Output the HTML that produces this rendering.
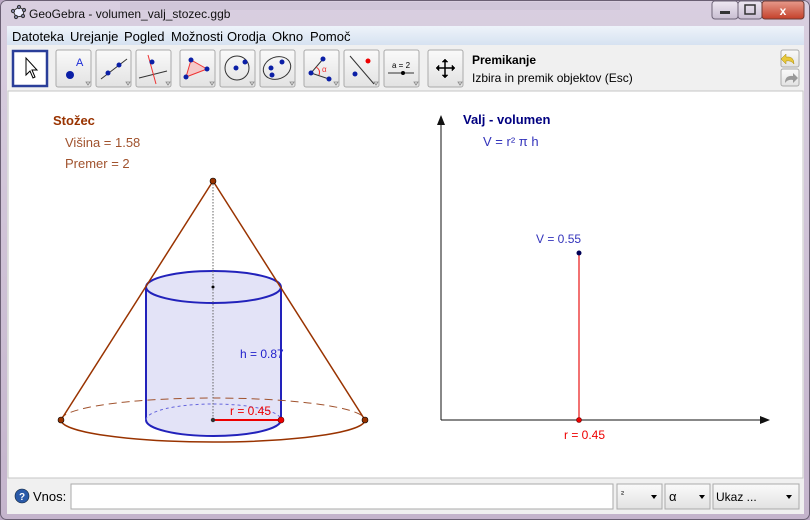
<!DOCTYPE html>
<html><head><meta charset="utf-8"><style>
html,body{margin:0;padding:0;width:810px;height:520px;overflow:hidden;background:#b9a6c2;}
svg{display:block;font-family:"Liberation Sans",sans-serif;}
</style></head><body>
<svg width="810" height="520" viewBox="0 0 810 520" xmlns="http://www.w3.org/2000/svg">
<defs>
<linearGradient id="tb" x1="0" y1="0" x2="0" y2="1"><stop offset="0" stop-color="#d9cfe0"/><stop offset="1" stop-color="#c4b4cc"/></linearGradient>
<linearGradient id="mb" x1="0" y1="0" x2="0" y2="1"><stop offset="0" stop-color="#eef3fa"/><stop offset="1" stop-color="#d6e2f1"/></linearGradient>
<linearGradient id="btn" x1="0" y1="0" x2="0" y2="1"><stop offset="0" stop-color="#fafafa"/><stop offset="1" stop-color="#e2e2e2"/></linearGradient>
<linearGradient id="cl" x1="0" y1="0" x2="0" y2="1"><stop offset="0" stop-color="#e79b8c"/><stop offset="1" stop-color="#c4402a"/></linearGradient>
<linearGradient id="wb" x1="0" y1="0" x2="0" y2="1"><stop offset="0" stop-color="#eee8f2"/><stop offset="1" stop-color="#c9bed2"/></linearGradient>
<marker id="ar" markerWidth="10" markerHeight="8" refX="9" refY="4" orient="auto" markerUnits="userSpaceOnUse"><path d="M0,0 L10,4 L0,8 Z" fill="#111"/></marker>
</defs>
<!-- window frame -->
<rect x="0" y="0" width="810" height="520" rx="6" fill="url(#tb)"/>
<rect x="120" y="2" width="500" height="8" fill="#c9bfd3" opacity=".6"/>
<rect x="0.5" y="0.5" width="809" height="519" rx="6" fill="none" stroke="#6a5f73"/>
<!-- title -->
<g transform="translate(13,7)" fill="none" stroke="#333" stroke-width="1">
<polygon points="6,0 11,3 10,9 3,10 0,4" fill="#eef"/>
<circle cx="6" cy="0" r="1.6" fill="#88a"/><circle cx="11" cy="3" r="1.6" fill="#88a"/><circle cx="10" cy="9" r="1.6" fill="#88a"/><circle cx="3" cy="10" r="1.6" fill="#88a"/><circle cx="0" cy="4" r="1.6" fill="#88a"/>
</g>
<text x="29" y="18" font-size="12" fill="#111">GeoGebra - volumen_valj_stozec.ggb</text>
<!-- window buttons -->
<rect x="712" y="1" width="26" height="18" rx="3" fill="url(#wb)" stroke="#6d6477"/>
<rect x="720" y="11" width="10" height="3" fill="#333"/>
<rect x="738" y="1" width="24" height="18" rx="3" fill="url(#wb)" stroke="#6d6477"/>
<rect x="745" y="5" width="10" height="9" fill="none" stroke="#333" stroke-width="1.5"/>
<rect x="762" y="1" width="42" height="18" rx="3" fill="url(#cl)" stroke="#6d3a33"/>
<text x="783" y="15" font-size="12" font-weight="bold" fill="#fff" text-anchor="middle">x</text>
<!-- inner client -->
<rect x="7" y="26" width="797" height="488" fill="#f0f0f0"/>
<rect x="7" y="26" width="797" height="19" fill="url(#mb)"/>
<g font-size="13" fill="#000">
<text x="12" y="41">Datoteka</text><text x="70" y="41">Urejanje</text><text x="124" y="41">Pogled</text><text x="171" y="41">Možnosti</text><text x="227" y="41">Orodja</text><text x="272" y="41">Okno</text><text x="310" y="41">Pomoč</text>
</g>
<!-- toolbar -->
<rect x="7" y="45" width="797" height="46" fill="#f0f0f0"/>
<g id="btns" stroke="#aaa" fill="url(#btn)">
<rect x="56" y="50" width="35" height="37" rx="2"/><rect x="96" y="50" width="35" height="37" rx="2"/><rect x="136" y="50" width="35" height="37" rx="2"/>
<rect x="180" y="50" width="35" height="37" rx="2"/><rect x="220" y="50" width="35" height="37" rx="2"/><rect x="260" y="50" width="35" height="37" rx="2"/>
<rect x="304" y="50" width="35" height="37" rx="2"/><rect x="344" y="50" width="35" height="37" rx="2"/><rect x="384" y="50" width="35" height="37" rx="2"/>
<rect x="428" y="50" width="35" height="37" rx="2"/>
</g>
<rect x="13" y="51" width="34" height="35" fill="#fff" stroke="#2a3e99" stroke-width="2.5"/>
<path d="M26,58 L26,75 L30,71 L33,78 L35,77 L32,70 L37,70 Z" fill="#fff" stroke="#000"/>
<g fill="none" stroke="#888" stroke-width=".8">
<path d="M86,82 l4,0 l-2,3z M126,82 l4,0 l-2,3z M166,82 l4,0 l-2,3z M210,82 l4,0 l-2,3z M250,82 l4,0 l-2,3z M290,82 l4,0 l-2,3z M334,82 l4,0 l-2,3z M374,82 l4,0 l-2,3z M414,82 l4,0 l-2,3z M458,82 l4,0 l-2,3z"/>
</g>
<!-- icons -->
<circle cx="70" cy="75" r="4" fill="#0b1fa6"/><text x="76" y="66" font-size="11" fill="#1a2ad6">A</text>
<line x1="101" y1="79" x2="127" y2="59" stroke="#333"/><circle cx="108" cy="73" r="2.5" fill="#0b1fa6"/><circle cx="119" cy="65" r="2.5" fill="#0b1fa6"/>
<line x1="139" y1="78" x2="167" y2="71" stroke="#333"/><line x1="148" y1="55" x2="156" y2="84" stroke="#e33"/><circle cx="152" cy="62" r="2.5" fill="#0b1fa6"/>
<polygon points="191,60 186,77 207,69" fill="#f5c8c8" stroke="#e33"/><circle cx="191" cy="60" r="2.5" fill="#0b1fa6"/><circle cx="186" cy="77" r="2.5" fill="#0b1fa6"/><circle cx="207" cy="69" r="2.5" fill="#0b1fa6"/>
<circle cx="237" cy="68" r="12" fill="none" stroke="#333"/><circle cx="236" cy="68" r="2.5" fill="#0b1fa6"/><circle cx="245" cy="62" r="2.5" fill="#0b1fa6"/>
<ellipse cx="277" cy="68" rx="14" ry="11" fill="none" stroke="#333" transform="rotate(-20 277 68)"/><circle cx="282" cy="62" r="2.5" fill="#0b1fa6"/><circle cx="271" cy="68" r="2.5" fill="#0b1fa6"/><circle cx="272" cy="75" r="2.5" fill="#0b1fa6"/>
<path d="M323,59 L311,73 L329,79" fill="none" stroke="#333"/><path d="M316,67 Q321,70 319,75" fill="none" stroke="#e33"/><text x="322" y="72" font-size="8" fill="#e33">α</text><circle cx="323" cy="59" r="2.5" fill="#0b1fa6"/><circle cx="311" cy="73" r="2.5" fill="#0b1fa6"/><circle cx="329" cy="79" r="2.5" fill="#0b1fa6"/>
<line x1="350" y1="56" x2="374" y2="84" stroke="#333"/><circle cx="368" cy="61" r="2.5" fill="#e00"/><circle cx="355" cy="74" r="2.5" fill="#0b1fa6"/>
<text x="392" y="68" font-size="8" fill="#000">a = 2</text><line x1="388" y1="73" x2="414" y2="73" stroke="#333"/><circle cx="403" cy="73" r="2" fill="#000"/>
<g stroke="#000" stroke-width="1.5" fill="#000"><line x1="437" y1="68" x2="454" y2="68"/><line x1="445" y1="60" x2="445" y2="77"/>
<path d="M436,68 l3,-3 v6z M455,68 l-3,-3 v6z M445,59 l-3,3 h6z M445,78 l-3,-3 h6z" stroke-width=".5"/></g>
<text x="472" y="64" font-size="12" font-weight="bold" fill="#000">Premikanje</text>
<text x="472" y="82" font-size="12" fill="#000">Izbira in premik objektov (Esc)</text>
<rect x="781" y="50" width="18" height="17" rx="2" fill="url(#btn)" stroke="#aaa"/><path d="M794,64 q0,-8 -8,-7 l0,-3 l-5,5 l5,5 l0,-3 q5,-1 8,3z" fill="#e8c83a" stroke="#a88a10" stroke-width=".5"/>
<rect x="781" y="69" width="18" height="17" rx="2" fill="url(#btn)" stroke="#aaa"/><path d="M785,83 q0,-8 8,-7 l0,-3 l5,5 l-5,5 l0,-3 q-5,-1 -8,3z" fill="#999"/>
<!-- canvas -->
<rect x="8" y="91" width="795" height="387" fill="#fff" stroke="#c6c6c6"/>
<!-- left drawing -->
<text x="53" y="125" font-size="13" font-weight="bold" fill="#993300">Stožec</text>
<text x="65" y="147" font-size="13" fill="#a0522d">Višina = 1.58</text>
<text x="65" y="168" font-size="13" fill="#a0522d">Premer = 2</text>
<!-- cylinder body -->
<path d="M146,287 L146,420 A67.5,16 0 0 0 281,420 L281,287 Z" fill="#e3e3f7"/>
<ellipse cx="213.5" cy="287" rx="67.5" ry="16" fill="#e3e3f7" stroke="#2222bb" stroke-width="2"/>
<line x1="146" y1="287" x2="146" y2="420" stroke="#2222bb" stroke-width="2"/>
<line x1="281" y1="287" x2="281" y2="420" stroke="#2222bb" stroke-width="2"/>
<path d="M146,420 A67.5,16 0 0 0 281,420" fill="none" stroke="#2222bb" stroke-width="2"/>
<path d="M146,420 A67.5,16 0 0 1 281,420" fill="none" stroke="#6666dd" stroke-width="1" stroke-dasharray="3,3"/>
<!-- cone -->
<path d="M61,420 A152,22 0 0 1 365,420" fill="none" stroke="#a0522d" stroke-width="1" stroke-dasharray="8,5"/>
<path d="M61,420 A152,22 0 0 0 365,420" fill="none" stroke="#993300" stroke-width="1.5"/>
<line x1="61" y1="420" x2="213" y2="181" stroke="#993300" stroke-width="1.5"/>
<line x1="365" y1="420" x2="213" y2="181" stroke="#993300" stroke-width="1.5"/>
<line x1="213" y1="181" x2="213" y2="420" stroke="#666" stroke-width="1" stroke-dasharray="1.5,1.5"/>
<circle cx="213" cy="287" r="1.5" fill="#000"/>
<line x1="213" y1="420" x2="281" y2="420" stroke="#e00" stroke-width="2"/>
<text x="240" y="358" font-size="12" fill="#2222cc">h = 0.87</text>
<text x="230" y="415" font-size="12" fill="#e00">r = 0.45</text>
<circle cx="213" cy="181" r="3" fill="#993300" stroke="#000" stroke-width=".6"/>
<circle cx="61" cy="420" r="3" fill="#993300" stroke="#000" stroke-width=".6"/>
<circle cx="365" cy="420" r="3" fill="#993300" stroke="#000" stroke-width=".6"/>
<circle cx="213" cy="420" r="2.2" fill="#333"/>
<circle cx="281" cy="420" r="3" fill="#e00" stroke="#600" stroke-width=".6"/>
<!-- right graph -->
<line x1="441" y1="420" x2="441" y2="116" stroke="#111" marker-end="url(#ar)"/>
<line x1="441" y1="420" x2="769" y2="420" stroke="#111" marker-end="url(#ar)"/>
<text x="463" y="124" font-size="13" font-weight="bold" fill="#000080">Valj - volumen</text>
<text x="483" y="146" font-size="13" fill="#3333bb">V = r² π h</text>
<line x1="579" y1="253" x2="579" y2="420" stroke="#ee4444" stroke-width="1.5"/>
<text x="536" y="243" font-size="12" fill="#3333bb">V = 0.55</text>
<circle cx="579" cy="253" r="2.5" fill="#000055"/>
<circle cx="579" cy="420" r="2.5" fill="#e00" stroke="#600" stroke-width=".6"/>
<text x="564" y="439" font-size="12" fill="#e00">r = 0.45</text>
<!-- input bar -->
<rect x="8" y="479" width="795" height="35" fill="#f0f0f0"/>
<circle cx="22" cy="496" r="7" fill="#2a5aa8" stroke="#123" stroke-width=".6"/><text x="22" y="500" font-size="10" font-weight="bold" fill="#fff" text-anchor="middle">?</text>
<text x="33" y="501" font-size="13" fill="#000">Vnos:</text>
<rect x="71" y="484" width="542" height="25" fill="#fff" stroke="#aaa"/>
<rect x="617" y="484" width="45" height="25" fill="url(#btn)" stroke="#aaa"/>
<text x="621" y="497" font-size="9" fill="#000">²</text><path d="M651,495 l6,0 l-3,4z" fill="#000"/>
<rect x="665" y="484" width="45" height="25" fill="url(#btn)" stroke="#aaa"/>
<text x="669" y="501" font-size="13" fill="#000">α</text><path d="M699,495 l6,0 l-3,4z" fill="#000"/>
<rect x="713" y="484" width="86" height="25" fill="url(#btn)" stroke="#aaa"/>
<text x="716" y="501" font-size="12" fill="#000">Ukaz ...</text><path d="M786,495 l6,0 l-3,4z" fill="#000"/>
</svg>
</body></html>
